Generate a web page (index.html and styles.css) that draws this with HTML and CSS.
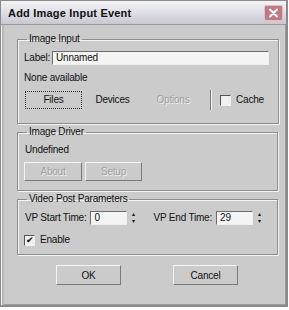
FILE: index.html
```html
<!DOCTYPE html>
<html lang="en">
<head>
    <meta charset="UTF-8">
    <title>Add Image Input Event</title>
    <link rel="stylesheet" href="styles.css">
</head>
<body>
    <div class="window">
        <div class="titlebar">
            <span class="title">Add Image Input Event</span>
            <span class="close">
                <svg width="13" height="12" viewBox="0 0 13 12">
                    <path d="M3 2.5 L10 9.5 M10 2.5 L3 9.5" stroke="#fff" stroke-width="2" stroke-linecap="round"/>
                </svg>
            </span>
        </div>
        <div class="content">
            <!-- Image Input group -->
            <fieldset class="group group-input">
                <legend>Image Input</legend>
                <div class="row label-row">
                    <span class="label">Label:</span>
                    <span class="textbox wide">Unnamed</span>
                </div>
                <div class="status">None available</div>
                <div class="row buttons-row">
                    <span class="btn flat focus files">Files</span>
                    <span class="btn flat devices">Devices</span>
                    <span class="btn flat disabled options">Options</span>
                    <span class="vsep"></span>
                    <span class="check"></span>
                    <span>Cache</span>
                </div>
            </fieldset>

            <!-- Image Driver group -->
            <fieldset class="group group-driver">
                <legend>Image Driver</legend>
                <div class="status">Undefined</div>
                <div class="row driver-row">
                    <span class="btn disabled about">About</span>
                    <span class="btn disabled setup">Setup</span>
                </div>
            </fieldset>

            <!-- Video Post group -->
            <fieldset class="group group-vp">
                <legend>Video Post Parameters</legend>
                <div class="row vp-row">
                    <span class="start-label">VP Start Time:</span>
                    <span class="spinner">
                        <span class="textbox num">0</span>
                        <span class="arrows">&#9652;<br>&#9662;</span>
                    </span>
                    <span class="end-label">VP End Time:</span>
                    <span class="spinner">
                        <span class="textbox num">29</span>
                        <span class="arrows">&#9652;<br>&#9662;</span>
                    </span>
                </div>
                <div class="row enable-row">
                    <span class="check checked">&#10004;</span>
                    <span>Enable</span>
                </div>
            </fieldset>

            <div class="footer">
                <span class="btn ok">OK</span>
                <span class="btn cancel">Cancel</span>
            </div>
        </div>
    </div>
</body>
</html>
```

FILE: styles.css
```css
body {
    margin: 0;
    background: #ffffff;
    font-family: "Liberation Sans", Arial, sans-serif;
    font-size: 10px;
    letter-spacing: -0.2px;
    color: #111;
}
.window {
    width: 285px;
    height: 304px;
    background: #cbcbcb;
    border: 1px solid #8a8a8a;
    border-right-width: 2px;
    border-bottom-width: 2px;
    box-shadow: inset 1px 1px 0 #f0f0f0, inset 3px 0 0 #b8b8b8, inset -1px -1px 0 #9c9c9c;
}
.titlebar {
    height: 23px;
    display: flex;
    align-items: center;
    justify-content: space-between;
    padding: 0 3px 0 7px;
    background: linear-gradient(#f4f4f6, #dcdce4 55%, #c8c8d2);
    border-bottom: 1px solid #9a9a9a;
}
.title {
    font-weight: bold;
    font-size: 11px;
    letter-spacing: 0.2px;
}
.close {
    width: 17px;
    height: 14px;
    background: #bf7a83;
    border: 1px solid #e4c0c4;
    border-radius: 2px;
    display: flex;
    align-items: center;
    justify-content: center;
}
.content {
    padding: 8px 8px 0 16px;
}
.group {
    margin: 0 0 2px 0;
    padding: 0 9px 6px 6px;
    border: 1px solid #8c8c8c;
    box-shadow: 1px 1px 0 #f4f4f4, inset 1px 1px 0 #f4f4f4;
    line-height: 12px;
}
.group legend {
    padding: 0 2px;
    margin-left: 3px;
}
.row {
    display: flex;
    align-items: center;
}
.label-row {
    margin-top: 6px;
}
.label {
    width: 28px;
}
.textbox {
    background: #f4f4f4;
    border: 1px solid #6c6c6c;
    border-right-color: #eee;
    border-bottom-color: #eee;
    height: 12px;
    line-height: 12px;
    padding-left: 3px;
}
.wide {
    width: 212px;
}
.status {
    margin: 7px 0 0 0;
}
.buttons-row {
    margin-top: 6px;
    margin-bottom: 7px;
}
.btn {
    display: flex;
    align-items: center;
    justify-content: center;
    height: 16px;
    border: 1px solid;
    border-color: #f4f4f4 #7a7a7a #7a7a7a #f4f4f4;
}
.btn.flat {
    border-color: transparent;
}
.btn.focus {
    outline: 1px dotted #333;
    outline-offset: -1px;
    width: 55px;
    margin-left: 1px;
}
.btn.disabled {
    color: #a0a0a0;
    text-shadow: 1px 1px 0 #eeeeee;
}
.devices {
    width: 47px;
    margin-left: 6px;
}
.options {
    width: 46px;
    margin-left: 12px;
}
.vsep {
    width: 1px;
    height: 20px;
    background: #777;
    border-right: 1px solid #f2f2f2;
    margin: 0 8px 0 13px;
}
.check {
    width: 9px;
    height: 9px;
    background: #f0f0f0;
    border: 1px solid #555;
    border-right-color: #eee;
    border-bottom-color: #eee;
    margin-right: 5px;
    font-size: 9px;
    line-height: 9px;
    text-align: center;
}
.group-driver {
    padding-bottom: 9px;
}
.group-driver .status {
    margin: 6px 0 0 1px;
}
.driver-row {
    gap: 3px;
    margin-top: 6px;
}
.about {
    width: 56px;
    height: 17px;
}
.setup {
    width: 55px;
    height: 17px;
}
.group-vp {
    padding-bottom: 8px;
}
.vp-row {
    margin-top: 6px;
}
.vp-row span {
    white-space: nowrap;
}
.start-label {
    margin-left: 1px;
}
.spinner {
    display: flex;
    align-items: center;
    margin-left: 4px;
}
.num {
    width: 32px;
}
.arrows {
    width: 8px;
    font-size: 6px;
    line-height: 7px;
    text-align: center;
    margin-left: 2px;
}
.end-label {
    margin-left: 16px;
}
.enable-row {
    margin-top: 9px;
}
.footer {
    display: flex;
    margin-top: 10px;
    padding-left: 39px;
    gap: 52px;
}
.ok, .cancel {
    width: 63px;
    height: 18px;
}
```
